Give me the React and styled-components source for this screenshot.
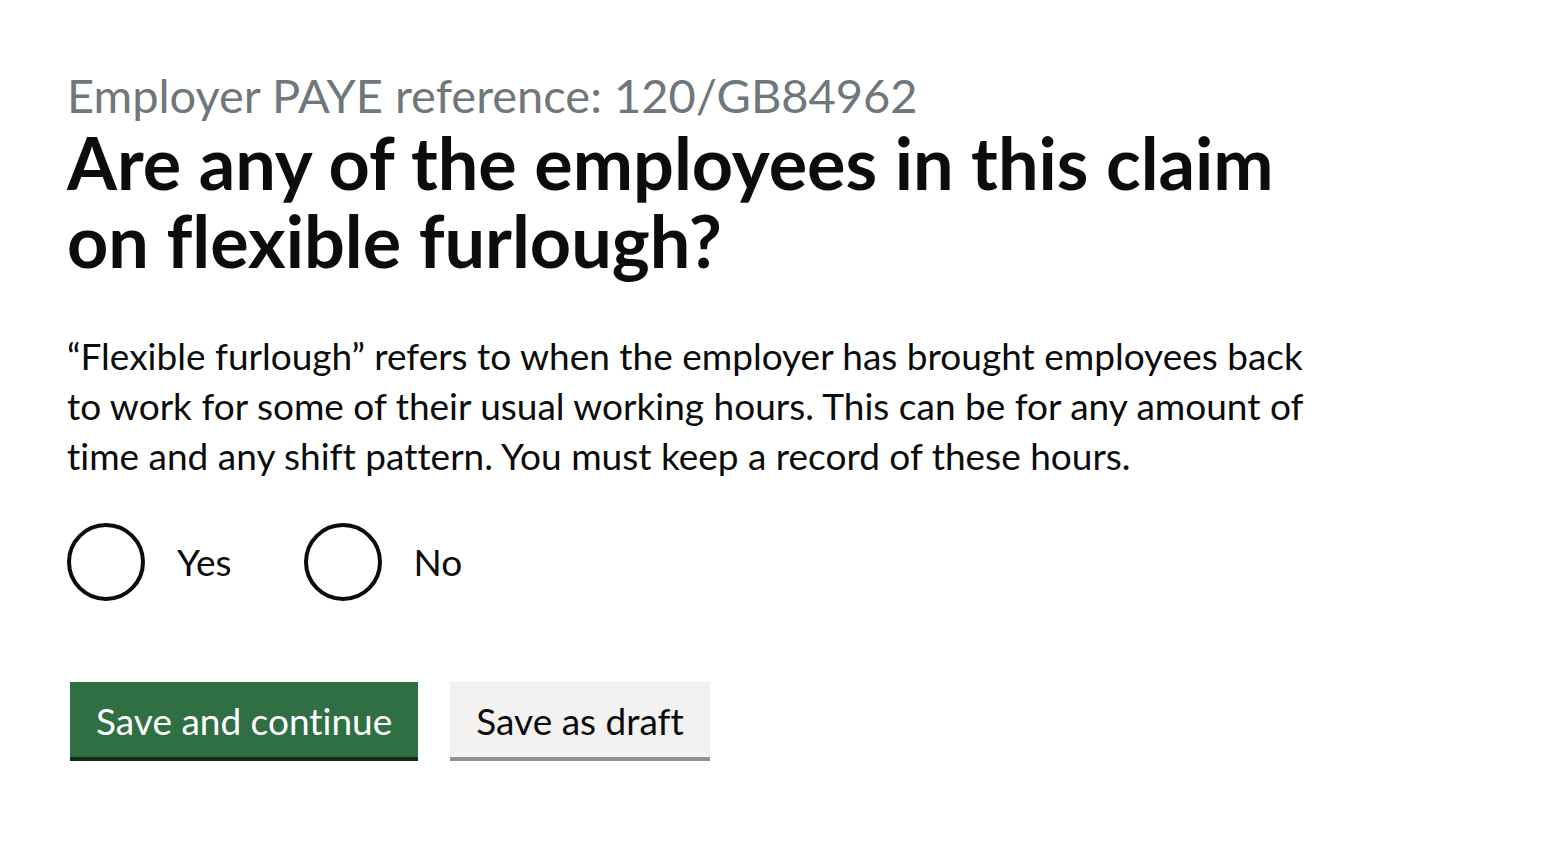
import React from "react";
import styled, { createGlobalStyle } from "styled-components";

const GlobalStyle = createGlobalStyle`
  html, body { margin: 0; padding: 0; background: #ffffff; }
  body {
    font-family: "Lato", "Liberation Sans", sans-serif;
    color: #0b0c0c;
    font-variant-ligatures: none;
    font-feature-settings: "liga" 0, "clig" 0, "dlig" 0;
    -webkit-font-smoothing: antialiased;
  }
  button { font-variant-ligatures: none; font-feature-settings: "liga" 0, "clig" 0; }
`;

const Page = styled.main`
  padding: 67px 67px 40px 67px;
  max-width: 1262px;
`;

const Caption = styled.span`
  display: block;
  font-size: 47px;
  line-height: 56px;
  font-weight: 400;
  color: #6f777b;
`;

const Heading = styled.h1`
  margin: 0;
  font-size: 72px;
  line-height: 78px;
  font-weight: 700;
  color: #0b0c0c;
`;

const Hint = styled.p`
  margin: 52px 0 0 0;
  font-size: 37px;
  line-height: 50px;
  font-weight: 400;
  color: #0b0c0c;
`;

const RadioGroup = styled.div`
  display: flex;
  align-items: center;
  margin-top: 42px;
`;

const RadioItem = styled.label`
  display: flex;
  align-items: center;
  margin-right: 40px;
  cursor: pointer;
`;

const RadioCircle = styled.span`
  box-sizing: border-box;
  width: 78px;
  height: 78px;
  border: 4px solid #0b0c0c;
  border-radius: 50%;
  background: #ffffff;
  flex: none;
`;

const RadioLabel = styled.span`
  padding: 0 32px;
  font-size: 37px;
  line-height: 50px;
  color: #0b0c0c;
`;

const ButtonGroup = styled.div`
  display: flex;
  align-items: flex-start;
  gap: 32px;
  margin-top: 81px;
  padding-left: 3px;
`;

const Button = styled.button`
  box-sizing: border-box;
  margin: 0;
  border: 4px solid transparent;
  border-radius: 0;
  padding: 16px 22px 14px;
  font-family: "Lato", "Liberation Sans", sans-serif;
  font-size: 37px;
  line-height: 37px;
  font-weight: 400;
  color: ${(p) => (p.$secondary ? "#0b0c0c" : "#ffffff")};
  background: ${(p) => (p.$secondary ? "#f3f2f1" : "#306f44")};
  box-shadow: 0 4px 0 ${(p) => (p.$secondary ? "#929191" : "#13291b")};
  cursor: pointer;
`;

export default function App() {
  return (
    <>
      <GlobalStyle />
      <Page>
        <Caption>Employer PAYE reference: 120/GB84962</Caption>
        <Heading>Are any of the employees in this claim on flexible furlough?</Heading>
        <Hint>
          “Flexible furlough” refers to when the employer has brought employees back to work for some
          of their usual working hours. This can be for any amount of time and any shift pattern. You
          must keep a record of these hours.
        </Hint>
        <RadioGroup>
          <RadioItem>
            <RadioCircle />
            <RadioLabel>Yes</RadioLabel>
          </RadioItem>
          <RadioItem>
            <RadioCircle />
            <RadioLabel>No</RadioLabel>
          </RadioItem>
        </RadioGroup>
        <ButtonGroup>
          <Button>Save and continue</Button>
          <Button $secondary>Save as draft</Button>
        </ButtonGroup>
      </Page>
    </>
  );
}
